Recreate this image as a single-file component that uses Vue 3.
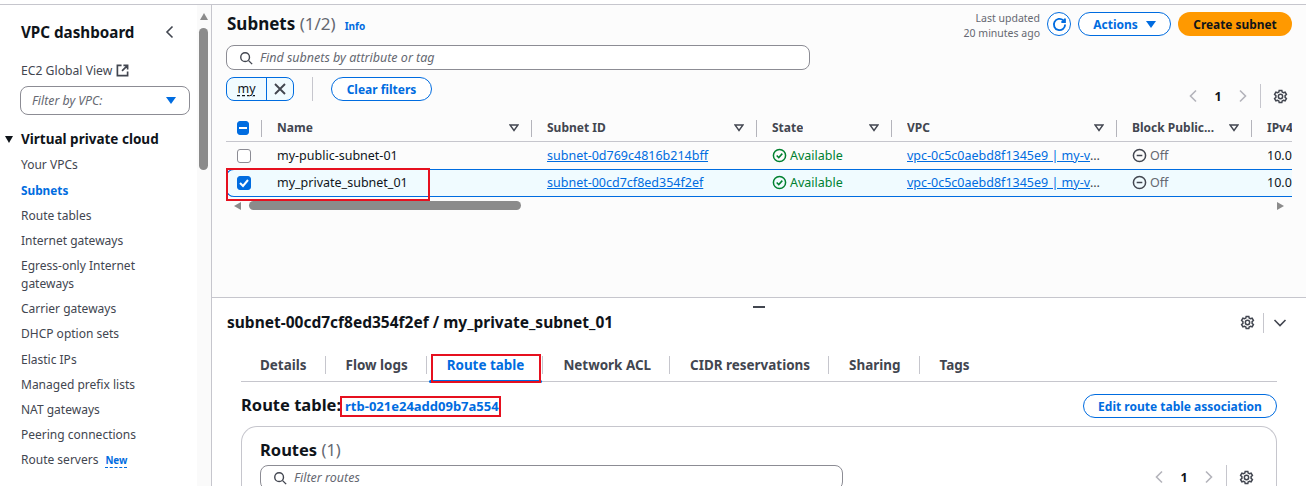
<script setup>
const nav = [
  { t: 'Your VPCs' },
  { t: 'Subnets', active: true },
  { t: 'Route tables' },
  { t: 'Internet gateways' },
  { t: 'Egress-only Internet gateways' },
  { t: 'Carrier gateways' },
  { t: 'DHCP option sets' },
  { t: 'Elastic IPs', low: true },
  { t: 'Managed prefix lists' },
  { t: 'NAT gateways' },
  { t: 'Peering connections' },
  { t: 'Route servers', isNew: true }
]
const cols = ['Name', 'Subnet ID', 'State', 'VPC', 'Block Public...', 'IPv4']
const rows = [
  { name: 'my-public-subnet-01', id: 'subnet-0d769c4816b214bff', selected: false },
  { name: 'my_private_subnet_01', id: 'subnet-00cd7cf8ed354f2ef', selected: true }
]
const tabs = ['Details', 'Flow logs', 'Route table', 'Network ACL', 'CIDR reservations', 'Sharing', 'Tags']
const gear = 'M6.600 1.500h2.800l.4 1.800 1.300.7 1.800-.6 1.400 2.400-1.400 1.300v1.800l1.400 1.300-1.400 2.400-1.800-.6-1.300.7-.4 1.800H6.600l-.4-1.800-1.300-.7-1.800.6-1.400-2.400 1.400-1.300V7.100L1.700 5.800l1.400-2.400 1.800.6 1.300-.7z'
</script>

<template>
  <div class="page">
    <aside class="side">
      <div class="side-head">
        <span class="side-title">VPC dashboard</span>
        <svg class="side-close" width="12" height="14" viewBox="0 0 12 14"><path d="M8.500 1.500 3 7l5.500 5.500" /></svg>
      </div>
      <div class="global">
        <span>EC2 Global View</span>
        <svg width="14" height="14" viewBox="0 0 14 14"><path d="M6 1.500H1.500v11h11V8M8 1.500h4.500V6M12.500 1.500 6.500 7.500" /></svg>
      </div>
      <div class="vpc-filter">
        <span>Filter by VPC:</span>
        <i class="tri-blue"></i>
      </div>
      <div class="section"><i class="tri-dark"></i>Virtual private cloud</div>
      <ul class="nav">
        <li v-for="n in nav" :key="n.t" :class="{ active: n.active, low: n.low }">
          {{ n.t }}<span v-if="n.isNew" class="new">New</span>
        </li>
      </ul>
      <div class="side-scroll">
        <i class="up"></i>
        <div class="thumb"></div>
      </div>
    </aside>

    <main class="main">
      <section class="top">
        <div class="head">
          <div class="title-wrap">
            <h1>Subnets <span>(1/2)</span></h1>
            <a class="info">Info</a>
          </div>
          <div class="actions">
            <div class="updated">Last updated<br />20 minutes ago</div>
            <button class="refresh">
              <svg width="16" height="16" viewBox="0 0 16 16"><path d="M14 8a6 6 0 1 1-2-4.500l1.500 1.500M13.800 1.500v3.800H10" /></svg>
            </button>
            <button class="btn actions-btn">Actions <i class="tri-blue"></i></button>
            <button class="primary">Create subnet</button>
          </div>
        </div>
        <div class="search">
          <svg width="16" height="16" viewBox="0 0 16 16"><circle cx="7" cy="7" r="5" /><path d="m11 11 4 4" /></svg>
          <span>Find subnets by attribute or tag</span>
        </div>
        <div class="filters">
          <div class="chip">
            <span class="chip-text"><u>my</u></span>
            <span class="chip-x"><svg width="14" height="14" viewBox="0 0 14 14"><path d="m2 2 10 10M12 2 2 12" /></svg></span>
          </div>
          <i class="vsep"></i>
          <button class="btn">Clear filters</button>
          <div class="pager">
            <svg class="arr" width="12" height="14" viewBox="0 0 12 14"><path d="M9 1.500 3.500 7 9 12.500" /></svg>
            <b>1</b>
            <svg class="arr" width="12" height="14" viewBox="0 0 12 14"><path d="M3 1.500 8.500 7 3 12.500" /></svg>
            <i class="psep"></i>
            <svg class="gear" width="15" height="15" viewBox="0 0 16 16"><path :d="gear" /><circle cx="8" cy="8" r="2.300" /></svg>
          </div>
        </div>
        <div class="table">
          <div class="tr th">
            <div class="cell sel"><span class="cb on"><i class="dash"></i></span></div>
            <div v-for="c in cols" :key="c" class="cell">
              <span class="label">{{ c }}</span>
              <svg v-if="c !== 'IPv4'" class="sort" width="10" height="8" viewBox="0 0 10 8"><path d="M1 1h8L5 6.500z" /></svg>
            </div>
          </div>
          <div v-for="r in rows" :key="r.id" class="tr row" :class="{ selected: r.selected }">
            <div class="cell sel">
              <span class="cb" :class="{ on: r.selected }">
                <svg v-if="r.selected" width="14" height="14" viewBox="0 0 14 14"><path d="m3 7 3 3 5-6" /></svg>
              </span>
            </div>
            <div class="cell">{{ r.name }}</div>
            <div class="cell"><a class="link">{{ r.id }}</a></div>
            <div class="cell ok">
              <svg width="15" height="15" viewBox="0 0 16 16"><circle cx="8" cy="8" r="6.500" /><path d="m5 8 2.200 2.200L11 6" /></svg>
              Available
            </div>
            <div class="cell vpc"><a class="link">vpc-0c5c0aebd8f1345e9 | my-v</a><span class="link-dots">…</span></div>
            <div class="cell off">
              <svg width="15" height="15" viewBox="0 0 16 16"><circle cx="8" cy="8" r="6.500" /><path d="M5 8h6" /></svg>
              Off
            </div>
            <div class="cell">10.0</div>
          </div>
        </div>
        <div class="hscroll">
          <i class="left"></i>
          <div class="hthumb"></div>
          <i class="right"></i>
        </div>
        <div class="red red-row"></div>
      </section>

      <section class="bottom">
        <i class="handle"></i>
        <div class="detail-head">
          <h2>subnet-00cd7cf8ed354f2ef / my_private_subnet_01</h2>
          <div class="detail-tools">
            <svg class="gear" width="15" height="15" viewBox="0 0 16 16"><path :d="gear" /><circle cx="8" cy="8" r="2.300" /></svg>
            <i class="psep"></i>
            <svg class="chev" width="16" height="16" viewBox="0 0 16 16"><path d="m2.500 5 5.500 5.500L13.500 5" /></svg>
          </div>
        </div>
        <div class="tabs">
          <div v-for="t in tabs" :key="t" class="tab" :class="{ active: t === 'Route table' }"><span>{{ t }}</span></div>
        </div>
        <div class="rt-head">
          <div class="rt-title">Route table:<a>rtb-021e24add09b7a554</a></div>
          <button class="btn edit">Edit route table association</button>
        </div>
        <div class="card">
          <h3>Routes <span>(1)</span></h3>
          <div class="card-row">
            <div class="search filter-routes">
              <svg width="16" height="16" viewBox="0 0 16 16"><circle cx="7" cy="7" r="5" /><path d="m11 11 4 4" /></svg>
              <span>Filter routes</span>
            </div>
            <div class="pager">
              <svg class="arr" width="12" height="14" viewBox="0 0 12 14"><path d="M9 1.500 3.500 7 9 12.500" /></svg>
              <b>1</b>
              <svg class="arr" width="12" height="14" viewBox="0 0 12 14"><path d="M3 1.500 8.500 7 3 12.500" /></svg>
              <i class="psep"></i>
              <svg class="gear" width="15" height="15" viewBox="0 0 16 16"><path :d="gear" /><circle cx="8" cy="8" r="2.300" /></svg>
            </div>
          </div>
        </div>
        <div class="red red-tab"></div>
        <div class="red red-rtb"></div>
      </section>
    </main>
  </div>
</template>

<style>
html, body { margin: 0; background: #fff; overflow: hidden; }
</style>

<style scoped>
* { box-sizing: border-box; }
svg { fill: none; stroke: currentColor; stroke-width: 1.600; flex: none; display: block; }
button { font: inherit; cursor: pointer; }
ul { list-style: none; margin: 0; padding: 0; }
h1, h2, h3 { margin: 0; }

.page {
  display: flex;
  width: 1306px;
  height: 482px;
  overflow: hidden;
  border-top: 1px solid #c6c6cd;
  margin-top: 4px;
  font-family: "Noto Sans", sans-serif;
  font-size: 12.5px;
  color: #0f141a;
  background: #fff;
}

/* Sidebar */
.side { position: relative; width: 212px; flex: none; padding: 0 0 0 21px; background: #fff; border-right: 1px solid #c6c6cd; color: #424650; }
.side-head { display: flex; align-items: center; justify-content: space-between; height: 22px; margin-top: 16px; padding-right: 35px; }
.side-title { font-size: 15.200px; font-weight: 700; color: #0f141a; }
.side-close { color: #424650; }
.global { display: flex; align-items: center; gap: 4px; margin-top: 18px; height: 18px; font-size: 12.200px; }
.global svg { width: 13px; height: 13px; stroke-width: 1.800; }
.vpc-filter { display: flex; align-items: center; justify-content: space-between; width: 170px; height: 29px; margin: 7px 0 0 -1px; padding: 0 13px 0 11px; border: 1px solid #8c8c94; border-radius: 8px; font-size: 12.300px; font-style: italic; color: #656871; background: #fff; }
.tri-blue { display: inline-block; width: 0; height: 0; border-left: 5px solid transparent; border-right: 5px solid transparent; border-top: 7px solid #006ce0; }
.tri-dark { position: absolute; left: 5px; top: 131px; width: 0; height: 0; border-left: 4px solid transparent; border-right: 4px solid transparent; border-top: 7px solid #0f141a; }
.section { margin-top: 14px; height: 20px; line-height: 20px; font-size: 13.500px; font-weight: 700; color: #0f141a; }
.nav { margin-top: 4px; font-size: 12px; }
.nav li { width: 135px; min-height: 25.100px; padding: 4px 0 3px; line-height: 18px; }
.nav li:first-child { margin-top: -1px; padding-bottom: 3px; }
.nav .active { padding-bottom: 4px; color: #006ce0; font-weight: 700; font-size: 11.800px; }
.nav .low { padding: 5px 0 2px; }
.new { margin-left: 7px; font-size: 9.800px; font-weight: 700; color: #006ce0; border-bottom: 1px dashed #006ce0; }
.side-scroll { position: absolute; right: 0; top: 0; bottom: 0; width: 14px; padding: 8px 3px 0 2px; display: flex; flex-direction: column; align-items: center; background: #fafafa; }
.up { width: 0; height: 0; border-left: 4.500px solid transparent; border-right: 4.500px solid transparent; border-bottom: 7px solid #8b8b8b; }
.thumb { width: 9px; height: 142px; margin-top: 8px; border-radius: 5px; background: #8b8b8b; }

/* Main */
.main { flex: 1; min-width: 0; display: flex; flex-direction: column; background: #fff; }
.top { position: relative; height: 293px; flex: none; padding: 0 14px 0 14px; background: #fcfcfc; border-bottom: 1px solid #c6c6cd; }
.head { display: flex; justify-content: space-between; align-items: flex-start; height: 40px; }
.title-wrap { display: flex; align-items: baseline; gap: 9px; padding: 6px 0 0 1px; }
h1 { font-size: 17px; font-weight: 700; line-height: 26px; }
h1 span { font-weight: 400; color: #656871; }
.info { margin-top: -1px; font-size: 10px; font-weight: 700; color: #006ce0; }
.actions { display: flex; align-items: flex-start; margin-top: 7px; }
.updated { margin-top: -1px; font-size: 10.500px; line-height: 15px; color: #656871; text-align: right; }
.refresh { display: flex; align-items: center; justify-content: center; width: 24px; height: 24px; margin-left: 7px; padding: 0; border: 1.500px solid #006ce0; border-radius: 50%; color: #006ce0; background: #fff; }
.refresh svg { stroke-width: 2; width: 15px; height: 15px; }
.btn { display: inline-flex; align-items: center; justify-content: center; gap: 8px; height: 24px; padding: 0 15px; border: 1px solid #006ce0; border-radius: 12px; background: #fff; color: #006ce0; font-size: 12px; font-weight: 700; }
.actions-btn { width: 93px; margin-left: 7px; }
.primary { width: 114px; height: 24px; margin-left: 7px; padding: 0; border: 0; border-radius: 12px; background: #ff9900; color: #0f141a; font-size: 11.900px; font-weight: 700; }
.search { display: flex; align-items: center; gap: 7px; width: 584px; height: 25px; padding: 0 12px; border: 1px solid #8c8c94; border-radius: 8px; background: #fff; font-style: italic; color: #656871; }
.search svg { width: 14px; height: 14px; color: #424650; }
.filters { display: flex; align-items: center; height: 24px; margin-top: 7px; }
.chip { display: flex; width: 68px; height: 24px; border: 1px solid #006ce0; border-radius: 8px; background: #f0fbff; overflow: hidden; }
.chip-text { width: 40px; text-align: center; line-height: 22px; border-right: 1px solid #006ce0; }
.chip-text u { text-decoration: underline dashed; text-underline-offset: 2px; }
.chip-x { flex: 1; display: flex; align-items: center; justify-content: center; color: #424650; }
.chip-x svg { stroke-width: 1.900; }
.vsep { width: 1px; height: 24px; margin: 0 18px; background: #c6c6cd; }
.filters .btn { width: 101px; padding: 0; }
.pager { display: flex; align-items: center; margin-left: auto; }
.filters .pager { margin-right: 4px; margin-top: 14px; }
.pager b { width: 38px; text-align: center; font-size: 12.500px; color: #0f141a; }
.arr { color: #b4b4bb; }
.psep { display: block; width: 1px; height: 24px; margin: 0 12px 0 11px; background: #c6c6cd; }
.gear { color: #424650; }

/* Table */
.table { margin-top: 13px; width: 1066px; overflow: hidden; }
.tr { display: grid; grid-template-columns: 36px 270px 225px 135px 225px 135px 40px; }
.th { height: 28px; border-bottom: 1px solid #c6c6cd; font-size: 12px; font-weight: 700; color: #424650; }
.cell { display: flex; align-items: center; gap: 3px; padding-left: 15px; white-space: nowrap; overflow: hidden; }
.sel { padding-left: 11px; }
.th .cell { position: relative; justify-content: space-between; padding-right: 13px; }
.th .cell::after { content: ""; position: absolute; right: 0; top: 6px; width: 1px; height: 17px; background: #b4b4bb; }
.th .cell:last-child { padding-right: 0; }
.th .cell:last-child::after { display: none; }
.label { overflow: hidden; }
.sort { color: #424650; stroke-width: 1.400; }
.row { height: 27px; }
.selected { height: 28px; padding-bottom: 1px; background: #f0fbff; border-radius: 8px 0 0 8px; box-shadow: inset 0 1px #006ce0, inset 0 -1px #006ce0, inset 1px 0 #006ce0; }
.cb { display: flex; align-items: center; justify-content: center; width: 14px; height: 14px; border: 1px solid #8c8c94; border-radius: 3px; background: #fff; }
.cb.on { border-color: #006ce0; background: #006ce0; color: #fff; }
.cb svg { stroke-width: 2; }
.dash { display: block; width: 8px; height: 2px; background: #fff; }
.link { color: #006ce0; text-decoration: underline; }
.ok { color: #00802f; }
.off { color: #656871; }
.off svg { color: #424650; }
.vpc { gap: 0; }
.link-dots { color: #424650; }

.hscroll { position: relative; height: 9px; margin: 4px 0 0 8px; width: 1050px; display: flex; align-items: center; }
.left { width: 0; height: 0; border-top: 4.500px solid transparent; border-bottom: 4.500px solid transparent; border-right: 7px solid #8b8b8b; }
.hthumb { width: 272px; height: 9px; margin-left: 8px; border-radius: 5px; background: #8b8b8b; }
.right { width: 0; height: 0; margin-left: auto; border-top: 4.500px solid transparent; border-bottom: 4.500px solid transparent; border-left: 7px solid #8b8b8b; }

.red { position: absolute; border: 2px solid #e6101f; pointer-events: none; }
.red-row { left: 14px; top: 163px; width: 204px; height: 33px; }

/* Bottom */
.bottom { position: relative; flex: 1; min-height: 0; padding: 0 29px 0 14px; background: #fff; }
.handle { position: absolute; left: 541px; top: 8px; width: 12px; height: 2px; background: #424650; }
.detail-head { display: flex; align-items: center; justify-content: space-between; height: 49px; margin-right: -11px; padding-left: 1px; }
h2 { font-size: 15.500px; font-weight: 700; line-height: 49px; }
.detail-tools { display: flex; align-items: center; }
.detail-tools .psep { height: 20px; margin: 0 8px; }
.chev { color: #424650; }
.tabs { display: flex; height: 35px; margin-left: 15px; border-bottom: 1px solid #c6c6cd; }
.tab { position: relative; display: flex; align-items: center; height: 34px; margin-top: 1px; padding: 0 19px; font-size: 13.450px; font-weight: 700; color: #424650; border-right: 1px solid transparent; }
.tab:not(:last-child)::after { content: ""; position: absolute; right: 0; top: 8px; width: 1px; height: 18px; background: #c6c6cd; }
.tab.active { color: #006ce0; }
.tab.active::before { content: ""; position: absolute; left: 1px; right: 1px; bottom: -1px; height: 3px; background: #006ce0; border-radius: 2px; }
.rt-head { display: flex; justify-content: space-between; align-items: center; height: 44px; margin-left: 15px; }
.rt-title { margin-top: 1px; font-size: 16.500px; font-weight: 700; }
.rt-title a { margin-left: 4px; font-size: 13px; color: #006ce0; }
.edit { width: 194px; margin-top: 4px; padding: 0; }
.card { height: 100px; margin-left: 15px; padding: 10px 18px; border: 1px solid #c6c6cd; border-bottom: 0; border-radius: 16px 16px 0 0; background: #fff; }
h3 { font-size: 16.500px; font-weight: 700; line-height: 26px; }
h3 span { font-weight: 400; color: #656871; }
.card-row { display: flex; align-items: flex-start; margin-top: 2px; }
.filter-routes { width: 583px; }
.card-row .pager { margin-top: 0; margin-right: 4px; }
.red-tab { left: 219px; top: 56px; width: 110px; height: 29px; }
.red-rtb { left: 128px; top: 98px; width: 161px; height: 21px; }
</style>
